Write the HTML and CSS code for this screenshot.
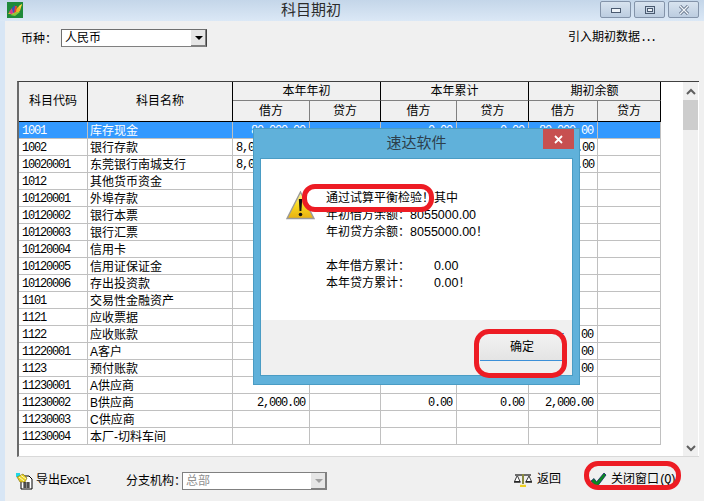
FILE: index.html
```html
<!DOCTYPE html>
<html lang="zh">
<head>
<meta charset="utf-8">
<title>科目期初</title>
<link rel="stylesheet" href="styles.css">
</head>
<body>
<div class="window">
  <header class="titlebar">
    <svg class="app-icon" width="16" height="16" viewBox="0 0 16 16"><rect width="16" height="16" fill="#1f8a3a"/><path d="M1 12 5 7 7 10 11 5 15 2 13 9 8 13 4 12Z" fill="#e8b82a"/><path d="M2 10 5 6 6 10 5 13Z" fill="#d83a8a"/><path d="M5 6 8 3 8 10 6 11Z" fill="#3050c8"/><path d="M8 4 10 4 9 10 7 11Z" fill="#e84030"/><path d="M12 4 15 2 13 7Z" fill="#f4e04a"/><path d="M3 13 10 10 13 10 8 14Z" fill="#8ac83a"/></svg>
    <h1 class="window-title">科目期初</h1>
    <div class="win-buttons">
      <span class="win-btn"><svg width="12" height="8" viewBox="0 0 12 8"><rect x="1.5" y="2.5" width="9" height="4" fill="#eef3f8" stroke="#4a5a70"/></svg></span>
      <span class="win-btn"><svg width="12" height="10" viewBox="0 0 12 10"><rect x="1.5" y="1.5" width="9" height="7" fill="none" stroke="#4a5a70"/><rect x="3.5" y="3.5" width="5" height="3" fill="#eef3f8" stroke="#4a5a70"/></svg></span>
      <span class="win-btn"><svg width="12" height="10" viewBox="0 0 12 10"><path d="M2 1 10 9M10 1 2 9" stroke="#5a6a80" stroke-width="3"/><path d="M2 1 10 9M10 1 2 9" stroke="#f2f6fa" stroke-width="1.4"/></svg></span>
    </div>
  </header>

  <main class="content">
    <div class="toolbar">
      <label class="currency-label">币种<span class="pn">：</span></label>
      <div class="combo currency-combo"><span class="combo-text">人民币</span><span class="combo-arrow"><i class="tri"></i></span></div>
      <span class="import-link">引入期初数据<span class="dots">...</span></span>
    </div>

    <div class="grid">
      <div class="grid-body">
        <table class="ledger">
          <colgroup><col class="c1"><col class="c2"><col class="c3"><col class="c4"><col class="c5"><col class="c6"><col class="c7"><col class="c8"></colgroup>
          <thead>
            <tr class="h1"><th rowspan="2" class="hb">科目代码</th><th rowspan="2" class="hb">科目名称</th><th colspan="2" class="hb">本年年初</th><th colspan="2" class="hb">本年累计</th><th colspan="2" class="hb">期初余额</th></tr>
            <tr class="h2"><th>借方</th><th class="hb">贷方</th><th>借方</th><th class="hb">贷方</th><th>借方</th><th class="hb">贷方</th></tr>
          </thead>
          <tbody>
            <tr class="selected"><td>1001</td><td class="nm">库存现金</td><td class="n">80,000.00</td><td class="n"></td><td class="n">0.00</td><td class="n">0.00</td><td class="n">80,000.00</td><td></td></tr>
            <tr><td>1002</td><td class="nm">银行存款</td><td class="n">8,000,000.00</td><td></td><td class="n">0.00</td><td class="n">0.00</td><td class="n over">8,000,000.00</td><td></td></tr>
            <tr><td>10020001</td><td class="nm">东莞银行南城支行</td><td class="n">8,000,000.00</td><td></td><td class="n">0.00</td><td class="n">0.00</td><td class="n over">8,000,000.00</td><td></td></tr>
            <tr><td>1012</td><td class="nm">其他货币资金</td><td></td><td></td><td></td><td></td><td></td><td></td></tr>
            <tr><td>10120001</td><td class="nm">外埠存款</td><td></td><td></td><td></td><td></td><td></td><td></td></tr>
            <tr><td>10120002</td><td class="nm">银行本票</td><td></td><td></td><td></td><td></td><td></td><td></td></tr>
            <tr><td>10120003</td><td class="nm">银行汇票</td><td></td><td></td><td></td><td></td><td></td><td></td></tr>
            <tr><td>10120004</td><td class="nm">信用卡</td><td></td><td></td><td></td><td></td><td></td><td></td></tr>
            <tr><td>10120005</td><td class="nm">信用证保证金</td><td></td><td></td><td></td><td></td><td></td><td></td></tr>
            <tr><td>10120006</td><td class="nm">存出投资款</td><td></td><td></td><td></td><td></td><td></td><td></td></tr>
            <tr><td>1101</td><td class="nm">交易性金融资产</td><td></td><td></td><td></td><td></td><td></td><td></td></tr>
            <tr><td>1121</td><td class="nm">应收票据</td><td></td><td></td><td></td><td></td><td></td><td></td></tr>
            <tr><td>1122</td><td class="nm">应收账款</td><td></td><td></td><td></td><td></td><td class="n">2,000.00</td><td></td></tr>
            <tr><td>11220001</td><td class="nm">A客户</td><td></td><td></td><td></td><td></td><td class="n">2,000.00</td><td></td></tr>
            <tr><td>1123</td><td class="nm">预付账款</td><td></td><td></td><td></td><td></td><td class="n">2,000.00</td><td></td></tr>
            <tr><td>11230001</td><td class="nm">A供应商</td><td></td><td></td><td></td><td></td><td></td><td></td></tr>
            <tr><td>11230002</td><td class="nm">B供应商</td><td class="n">2,000.00</td><td></td><td class="n">0.00</td><td class="n">0.00</td><td class="n">2,000.00</td><td></td></tr>
            <tr><td>11230003</td><td class="nm">C供应商</td><td></td><td></td><td></td><td></td><td></td><td></td></tr>
            <tr><td>11230004</td><td class="nm">本厂-切料车间</td><td></td><td></td><td></td><td></td><td></td><td></td></tr>
          </tbody>
        </table>
      </div>
      <div class="scrollbar">
        <svg class="sb-arrow" width="10" height="7" viewBox="0 0 10 7"><path d="M1 6 5 2 9 6" fill="none" stroke="#606060" stroke-width="2"/></svg>
        <div class="sb-thumb"></div>
        <div class="sb-track"></div>
        <svg class="sb-arrow" width="10" height="7" viewBox="0 0 10 7"><path d="M1 1 5 5 9 1" fill="none" stroke="#606060" stroke-width="2"/></svg>
      </div>
    </div>

    <footer class="footer">
      <div class="foot-item export">
        <svg width="17" height="17" viewBox="0 0 17 17"><rect x="0" y="0" width="4" height="4" fill="#20d8e8"/><path d="M5 3H13L16 6V16H5Z" fill="#fff" stroke="#000"/><path d="M1 4 7 1 11 5 9 9 4 9Z" fill="#e8d020" stroke="#8a7a20" stroke-width=".7"/><path d="M3 4 8 8M5 2.500 10 6" stroke="#fff" stroke-width=".8"/><path d="M7 10H14M7 12H14M7 14H14M9 9V15M12 9V15" stroke="#000" stroke-width=".9"/></svg>
        <span class="export-text">导出<span class="mono">Excel</span></span>
      </div>
      <span class="branch-label">分支机构<span class="pn">：</span></span>
      <div class="combo branch-combo disabled"><span class="combo-text">总部</span><span class="combo-arrow"><i class="tri"></i></span></div>
      <div class="foot-item back">
        <svg width="20" height="14" viewBox="0 0 20 14"><path d="M2 2H18" stroke="#333" stroke-width="1.4"/><path d="M10 1V11" stroke="#8a8a40" stroke-width="2"/><path d="M7 13H13" stroke="#f0d020" stroke-width="2.4"/><path d="M4 3 1.500 8.500H7L4.500 3M16 3 13 8.500H18.500L16 3" fill="#fff" stroke="#222" stroke-width=".9"/><path d="M1 9H7.500M12.500 9H19" stroke="#222" stroke-width="1.4"/></svg>
        <span>返回</span>
      </div>
      <div class="foot-item close">
        <svg width="17" height="16" viewBox="0 0 17 16"><path d="M1 9 4 6.500 6.500 10 14 1 16 3 6.500 15.500Z" fill="#0a8a1e" stroke="#16236a" stroke-width=".8"/></svg>
        <span>关闭窗口<span class="q">(Q)</span></span>
      </div>
    </footer>
  </main>

  <section class="dialog">
    <div class="dialog-title">速达软件<span class="dialog-close"><svg width="9" height="9" viewBox="0 0 9 9"><path d="M1 1 8 8M8 1 1 8" stroke="#fff" stroke-width="1.8"/></svg></span></div>
    <div class="dialog-inner">
      <div class="dialog-msg">
        <svg class="warn" width="29" height="29" viewBox="0 0 29 29"><defs><linearGradient id="warnfill" x1="0" y1="0" x2="0" y2="1"><stop offset="0" stop-color="#fff6b0"/><stop offset=".5" stop-color="#f8d820"/><stop offset="1" stop-color="#e8b010"/></linearGradient></defs><path d="M14.500 1 28 27.500H1Z" fill="url(#warnfill)" stroke="#9a9a9a" stroke-width="1.400"/><path d="M12.800 8H16.200L15.400 20H13.600Z" fill="#111"/><circle cx="14.500" cy="23.500" r="1.800" fill="#111"/></svg>
        <div class="msg-text">
          <p>通过试算平衡检验<span class="pn">！</span>其中</p>
          <p>年初借方余额<span class="pn">：</span><span class="fig">8055000.00</span></p>
          <p>年初贷方余额<span class="pn">：</span><span class="fig">8055000.00</span><span class="pn">！</span></p>
          <p class="gap">本年借方累计<span class="pn">：</span><span class="amt fig">0.00</span></p>
          <p>本年贷方累计<span class="pn">：</span><span class="amt fig">0.00</span><span class="pn">！</span></p>
        </div>
      </div>
      <div class="dialog-foot"><button class="ok-btn">确定</button></div>
    </div>
  </section>

  <div class="mark mark-text"></div>
  <div class="mark mark-ok"></div>
  <div class="mark mark-close"></div>
</div>
</body>
</html>
```
FILE: styles.css
```css
* { box-sizing: border-box; }
html, body { margin: 0; padding: 0; height: 100%; overflow: hidden; }
body { font: 12px/17px "Liberation Sans", "Noto Sans CJK SC", sans-serif; color: #000; }
.window { position: relative; width: 704px; height: 501px; display: flex; flex-direction: column; background: #d8e6f5; }
.pn { font-family: "Noto Sans CJK TC", sans-serif; }
.mono { font-family: "Liberation Mono", monospace; letter-spacing: -1.2px; }
.q { font-family: "Liberation Mono", monospace; letter-spacing: -2px; }
.fig { font-size: 12.5px; }

.titlebar { height: 21px; flex: none; display: flex; align-items: flex-start; padding-left: 7px; background: linear-gradient(#c4d6e9, #dbe8f6); }
.app-icon { margin-top: 2px; }
.window-title { margin: 1px 0 0 258px; font-size: 15px; font-weight: 400; line-height: 18px; color: #2b2b2b; }
.win-buttons { margin-left: auto; margin-right: 5px; display: flex; gap: 3px; padding-top: 1px; }
.win-btn { width: 31px; height: 17px; display: flex; align-items: center; justify-content: center; border: 1px solid #8494aa; border-radius: 2px; background: linear-gradient(#d8e3ef, #bccde0); }

.content { flex: 1; margin-left: 5px; background: #f0f0f0; display: flex; flex-direction: column; min-height: 0; }

.toolbar { height: 60px; flex: none; display: flex; align-items: flex-start; padding: 8px 0 0 16px; }
.currency-label { width: 40px; white-space: nowrap; }
.combo { display: flex; height: 18px; background: #fff; border: 1px solid #6f6f6f; border-right-color: #404040; border-bottom-color: #808080; }
.combo-text { flex: 1; padding-left: 3px; padding-top: 1px; line-height: 15px; }
.combo-arrow { width: 16px; display: flex; align-items: center; justify-content: center; background: #e6e6e6; border-left: 1px solid #fff; box-shadow: inset -1px -1px 0 #808080; }
.tri { width: 0; height: 0; border: 4px solid transparent; border-top: 4px solid #000; border-bottom: 0; }
.currency-combo { width: 146px; }
.import-link { margin-left: auto; margin-right: 49px; white-space: nowrap; }
.dots { font-family: "Liberation Mono", monospace; letter-spacing: -2.2px; }

.grid { height: 376px; flex: none; margin-left: 12px; width: 682px; display: flex; background: #fff; border-top: 1px solid #404040; border-left: 2px solid #6a6a6a; border-bottom: 1px solid #d9d9d9; }
.grid-body { width: 664px; flex: none; overflow: hidden; }
.ledger { table-layout: fixed; width: 642px; border-collapse: separate; border-spacing: 0; }
.c1 { width: 69px; } .c2 { width: 145px; } .c3 { width: 77px; } .c4 { width: 71px; }
.c5 { width: 76px; } .c6 { width: 72px; } .c7 { width: 69px; } .c8 { width: 63px; }
.ledger th { padding: 0; font-weight: 400; background: #f0f0f0; text-align: center; border-right: 1px solid #808080; border-bottom: 1px solid #808080; overflow: hidden; }
.ledger th.hb { border-right-color: #000; }
.ledger th[rowspan] { border-bottom-color: #000; }
.h1 th { height: 19px; }
.h2 th { height: 21px; border-bottom-color: #000 !important; }
.ledger td { height: 17px; padding: 2px 3px 0; border-right: 1px solid #c0c0c0; border-bottom: 1px solid #c0c0c0; white-space: nowrap; overflow: hidden; line-height: 14px; font-family: "Liberation Mono", "Noto Sans CJK SC", monospace; letter-spacing: -1.2px; }
.ledger td.nm { font-family: "Liberation Sans", "Noto Sans CJK SC", sans-serif; letter-spacing: 0; padding-left: 2px; }
.ledger td.n { text-align: right; padding-right: 4px; }
.ledger td.over { direction: rtl; text-align: left; overflow: visible; }
.selected td { background: #3399ff; color: #fff; }

.scrollbar { width: 15px; flex: none; display: flex; flex-direction: column; align-items: center; background: #f0f0f0; padding: 6px 0 4px; }
.sb-arrow { flex: none; }
.sb-thumb { width: 100%; height: 30px; margin-top: 5px; background: #cdcdcd; flex: none; }
.sb-track { flex: 1; }

.footer { flex: 1; display: flex; align-items: flex-start; padding: 14px 0 0 11px; white-space: nowrap; }
.foot-item { display: flex; align-items: center; gap: 3px; flex: none; }
.export { margin-top: 1px; width: 110px; }
.export-text { line-height: 17px; }
.branch-label { width: 56px; flex: none; }
.branch-combo { width: 145px; flex: none; border-color: #808080; margin-top: 1px; }
.branch-combo .combo-text { color: #909090; }
.branch-combo .tri { border-top-color: #a0a0a0; }
.back { margin-left: 186px; gap: 4px; }
.close { margin-left: 29px; gap: 4px; }

.dialog { position: absolute; left: 253px; top: 128px; width: 327px; height: 257px; padding: 0 6px 8px; display: flex; flex-direction: column; background: #60b1da; border: 1px solid #4a9cc4; }
.dialog-title { position: relative; height: 29px; flex: none; text-align: center; font-size: 15px; line-height: 28px; color: #2d3f4c; }
.dialog-close { position: absolute; right: -1px; top: 0; width: 31px; height: 20px; display: flex; align-items: center; justify-content: center; background: #c75050; }
.dialog-inner { flex: 1; display: flex; flex-direction: column; background: #fff; border: 1px solid #4a9cc4; }
.dialog-msg { flex: 1; position: relative; padding: 29px 0 0 65px; }
.warn { position: absolute; left: 25px; top: 32px; }
.msg-text p { margin: 0; height: 17px; line-height: 17px; }
.msg-text .gap { margin-top: 17px; }
.amt { margin-left: 24px; }
.dialog-foot { height: 55px; flex: none; background: #f0f0f0; padding: 13px 0 0 219px; }
.ok-btn { display: block; width: 84px; height: 28px; padding: 1px 0 0; font: inherit; color: #000; background: linear-gradient(#f2f2f2, #e4e4e4); border: 0; border-top: 1px solid #3c90d8; border-bottom: 1px solid #3c90d8; }

.mark { position: absolute; border: 5px solid #ed1c24; background: transparent; }
.mark-text { left: 302px; top: 184px; width: 132px; height: 28px; border-radius: 13px; }
.mark-ok { left: 474px; top: 329px; width: 93px; height: 49px; border-radius: 15px; }
.mark-close { left: 584px; top: 461px; width: 97px; height: 29px; border-radius: 14px; }
```
